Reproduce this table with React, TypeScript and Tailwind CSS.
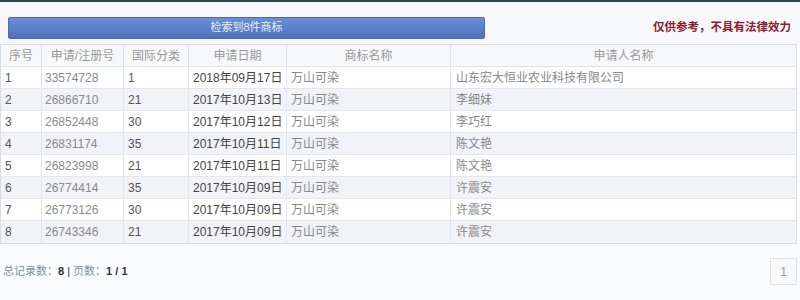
import React from "react";

const rows = [
  ["1", "33574728", "1", "2018年09月17日", "万山可染", "山东宏大恒业农业科技有限公司"],
  ["2", "26866710", "21", "2017年10月13日", "万山可染", "李细妹"],
  ["3", "26852448", "30", "2017年10月12日", "万山可染", "李巧红"],
  ["4", "26831174", "35", "2017年10月11日", "万山可染", "陈文艳"],
  ["5", "26823998", "21", "2017年10月11日", "万山可染", "陈文艳"],
  ["6", "26774414", "35", "2017年10月09日", "万山可染", "许震安"],
  ["7", "26773126", "30", "2017年10月09日", "万山可染", "许震安"],
  ["8", "26743346", "21", "2017年10月09日", "万山可染", "许震安"],
];

const headers = ["序号", "申请/注册号", "国际分类", "申请日期", "商标名称", "申请人名称"];

const font = { fontFamily: '"Liberation Sans", "Noto Sans CJK SC", sans-serif' };

export default function App() {
  return (
    <div className="w-[800px] h-[300px] bg-[#fbfcfd] overflow-hidden relative" style={font}>
      <div className="h-[2px] bg-[#34444f]" />
      <div className="flex items-center justify-between pl-[8px] pr-[9px] pt-[9px] h-[42px] bg-[#f6f8fb]">
        <div className="w-[477px] h-[22px] rounded-[2px] bg-gradient-to-b from-[#6a8fd6] to-[#4f72ba] border border-[#4a6aad] flex items-center justify-center text-[11px] text-[#e9eefc]">
          检索到8件商标
        </div>
        <div className="text-[11.5px] font-bold text-[#8e1b2a]">仅供参考，不具有法律效力</div>
      </div>
      <div className="w-[797px] border border-[#d9dde3] bg-white">
        <div className="grid grid-cols-[41px_82px_65px_98px_164px_1fr] h-[22px] bg-[#f7f8fa] border-b border-[#dfe2e6] text-[12px] text-[#999]">
          {headers.map((h, i) => (
            <div
              key={i}
              className={`flex items-center justify-center ${i < 5 ? "border-r border-[#dfe2e6]" : ""}`}
            >
              {h}
            </div>
          ))}
        </div>
        {rows.map((r, ri) => (
          <div
            key={ri}
            className={`grid grid-cols-[41px_82px_65px_98px_164px_1fr] h-[22px] text-[12px] ${ri % 2 === 1 ? "bg-[#f1f3f7]" : "bg-white"} ${ri < rows.length - 1 ? "border-b border-[#e3e6ea]" : ""}`}
          >
            <div className="flex items-center pl-[4px] border-r border-[#e3e6ea] text-[#555]">{r[0]}</div>
            <div className="flex items-center pl-[3px] border-r border-[#e3e6ea] text-[#8a8a8a]">{r[1]}</div>
            <div className="flex items-center pl-[4px] border-r border-[#e3e6ea] text-[#555]">{r[2]}</div>
            <div className="flex items-center pl-[4px] border-r border-[#e3e6ea] text-[#444]">{r[3]}</div>
            <div className="flex items-center pl-[4px] border-r border-[#e3e6ea] text-[#888]">{r[4]}</div>
            <div className="flex items-center pl-[5px] text-[#888]">{r[5]}</div>
          </div>
        ))}
      </div>
      <div className="flex items-center justify-between mt-[14px] pl-[3px] pr-[3px]">
        <div className="text-[11px] text-[#7a9499]">
          总记录数：<span className="font-bold text-[#333]">8</span>
          <span className="text-[#333]"> | </span>页数：<span className="font-bold text-[#333]">1 / 1</span>
        </div>
        <div className="w-[27px] h-[27px] border border-[#dfe2e6] bg-[#f8f9fa] flex items-center justify-center text-[12px] text-[#999]">
          1
        </div>
      </div>
    </div>
  );
}
